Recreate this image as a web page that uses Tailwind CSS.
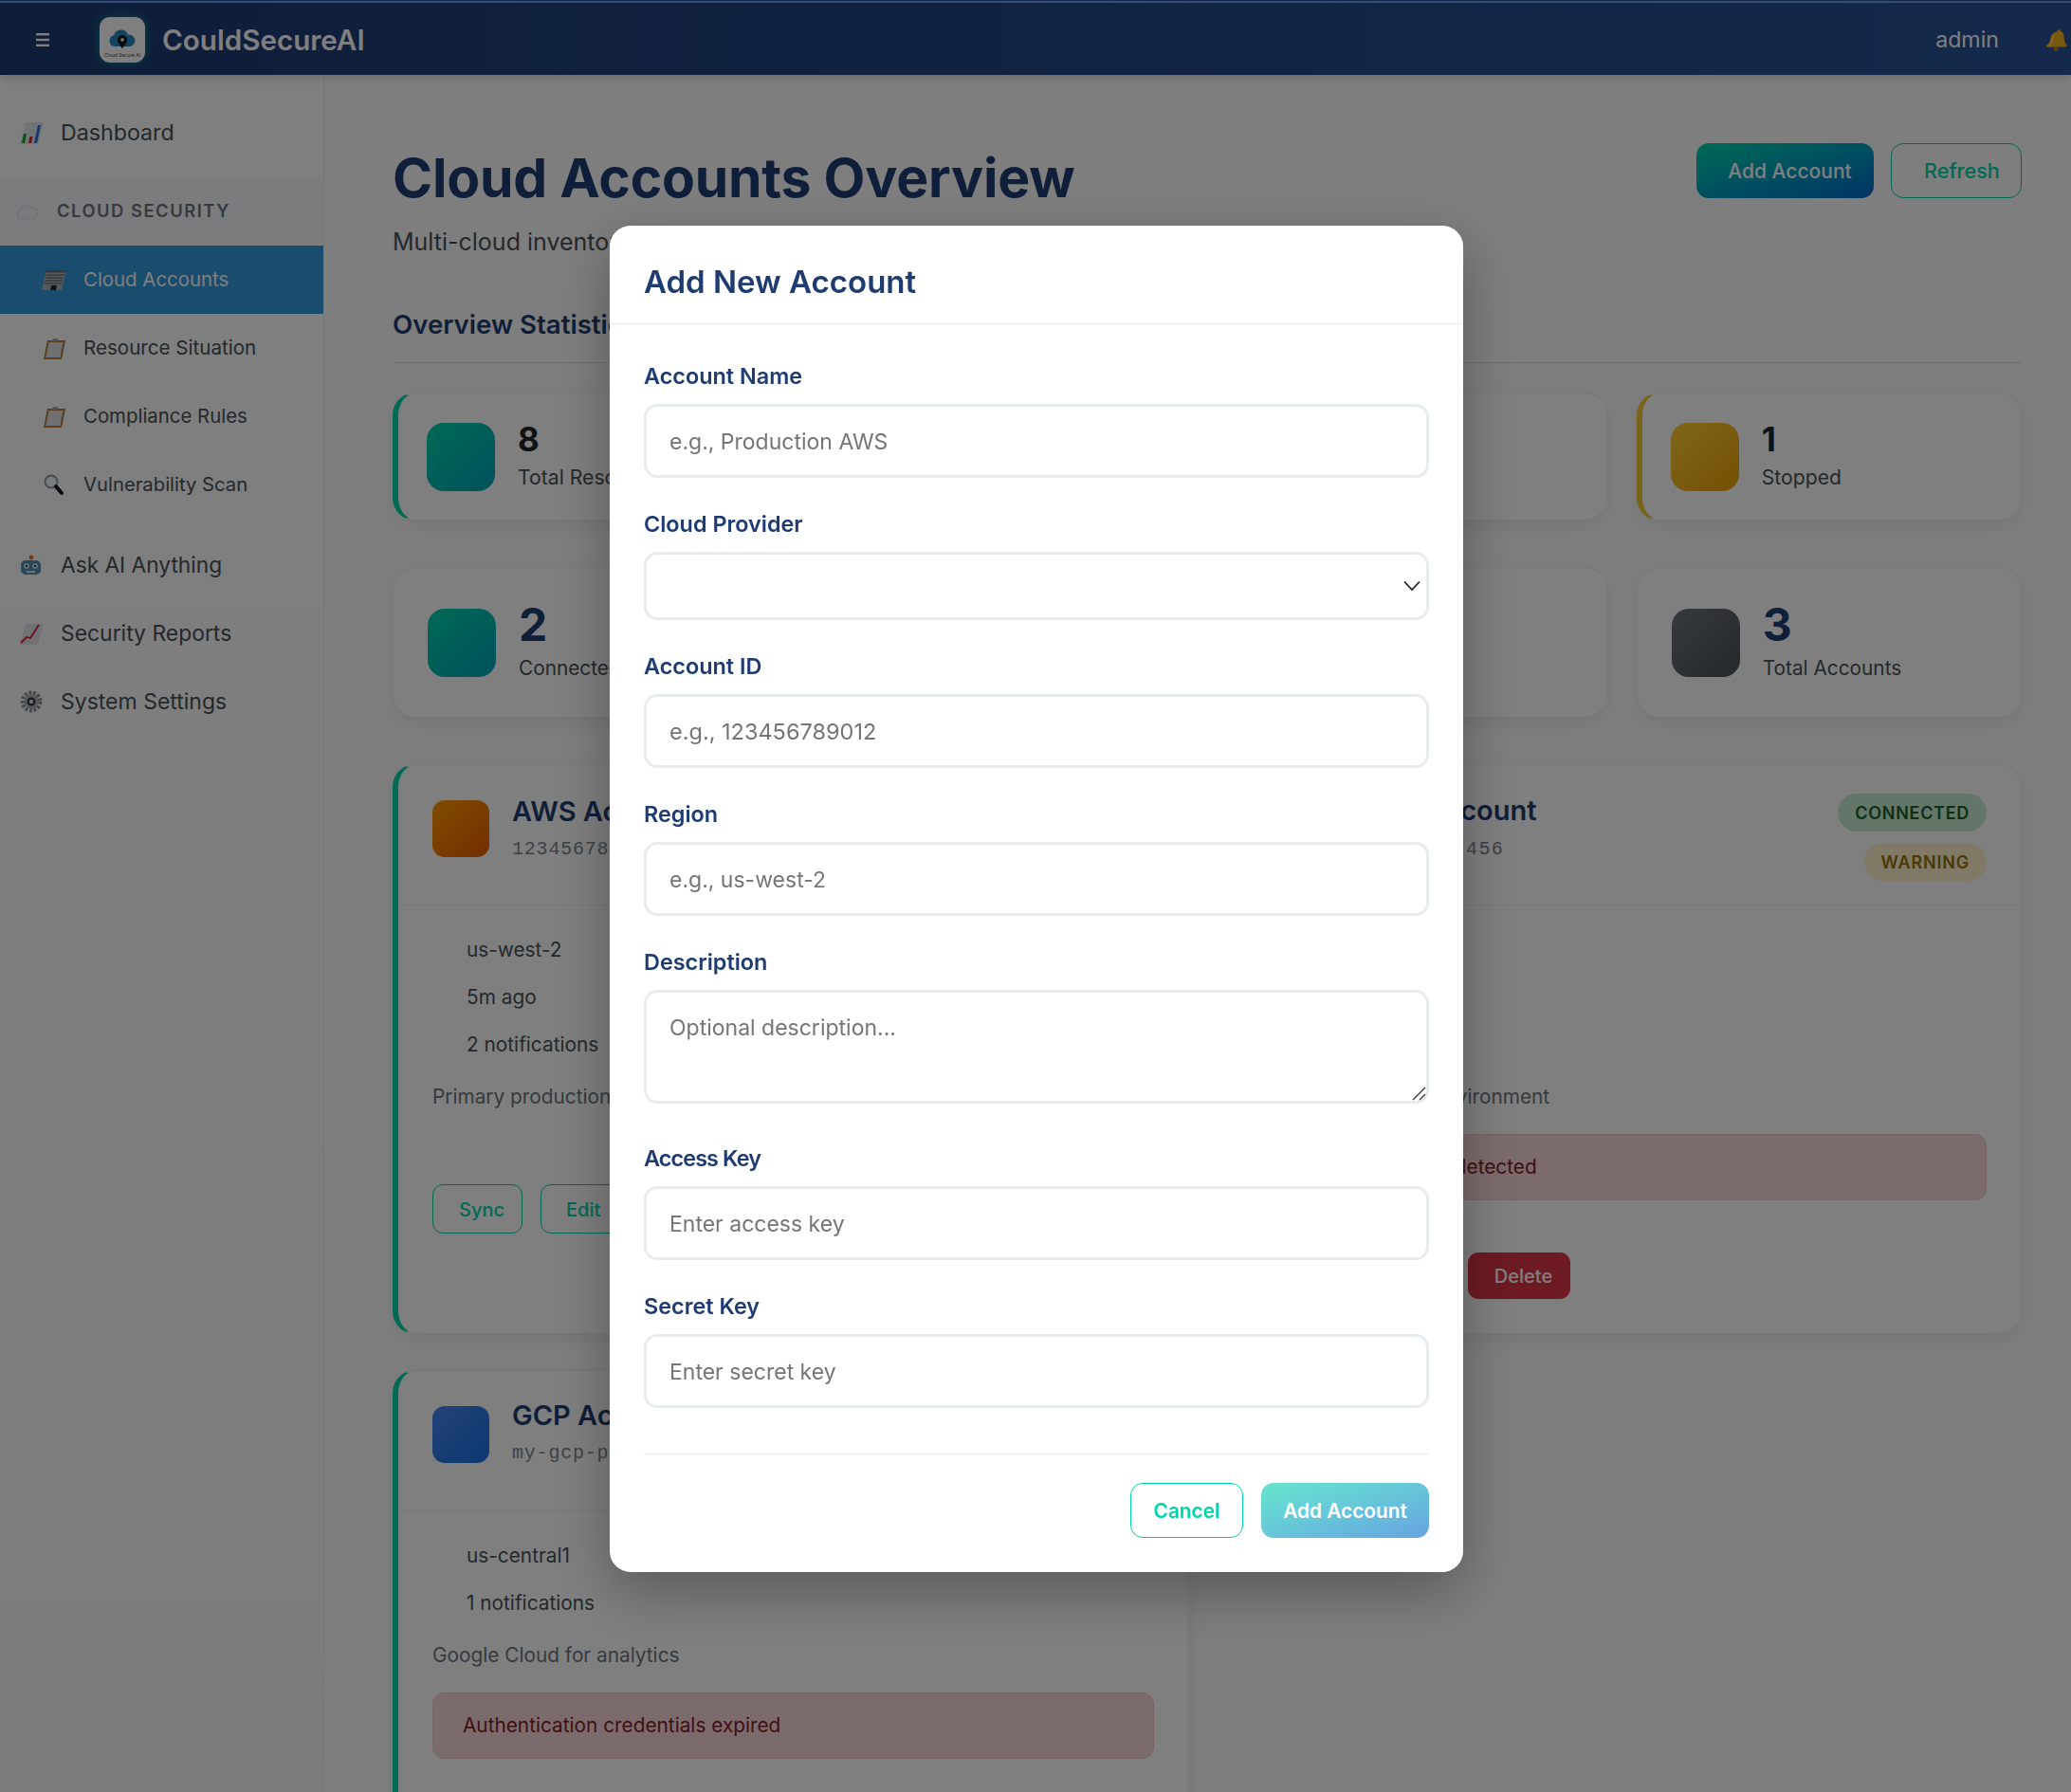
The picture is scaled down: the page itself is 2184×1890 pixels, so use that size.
<!DOCTYPE html>
<html lang="en">
<head>
    <meta charset="UTF-8">
    <meta name="viewport" content="width=device-width, initial-scale=1.0">
    <title>CouldSecureAI - Cloud Accounts</title>
    <script src="https://cdn.jsdelivr.net/npm/@tailwindcss/browser@4"></script>
</head>
<body class="w-[2184px] h-[1890px] overflow-hidden bg-[#fdfdfd] font-['Inter',sans-serif] text-[#495057]">

    <!-- Top bar -->
    <header class="h-[79px] bg-gradient-to-r from-[#1c3a70] to-[#2a5298] shadow-[0_2px_10px_rgba(0,0,0,0.2)] relative z-10">
        <div class="h-[1px] bg-[#2a5298]"></div>
        <div class="h-[2px] bg-[#6a9ae8]"></div>
        <div class="h-[78px] flex items-center pl-[38px] pr-[3px]">
            <svg class="w-[14px] h-[14px]" viewBox="0 0 14 14"><rect y="0" width="14" height="2.4" fill="#fff"/><rect y="5.8" width="14" height="2.4" fill="#fff"/><rect y="11.6" width="14" height="2.4" fill="#fff"/></svg>
            <div class="ml-[53px] w-[48px] h-[48px] rounded-[11px] bg-white flex flex-col items-center shadow-[0_0_10px_rgba(0,212,170,0.5)]">
                <svg class="w-[30px] h-[24px] mt-[12px]" viewBox="0 0 30 24">
                    <path d="M7 19a6 6 0 0 1-1-11.8A8 8 0 0 1 21 6.5 6.3 6.3 0 0 1 23 19z" fill="#2b84bd"/>
                    <path d="M15 7a5 5 0 0 1 5 5c0 3.500-5 9-5 9s-5-5.500-5-9a5 5 0 0 1 5-5z" fill="#14181f"/>
                    <circle cx="15" cy="12" r="1.800" fill="#fff"/>
                </svg>
                <span class="text-[5px] leading-[6px] mt-[1px] text-[#444] whitespace-nowrap">Cloud Secure AI</span>
            </div>
            <span class="ml-[18px] text-[29.6px] leading-[36px] font-semibold text-white">CouldSecureAI</span>
            <span class="ml-auto text-[23.2px] text-white">admin</span>
            <svg class="ml-[49px] w-[24px] h-[24px] shrink-0" viewBox="0 0 24 24">
                <path d="M14 1c1 0 2 1 2 2 3 1 3.500 4 3.800 7 .3 4 1.200 6 3.200 8l-1 1.500H1l0-1.500c3-2 4-4 4.500-8 .6-4 3.500-6 6.500-6.500.3-.9 1-1.500 2-1.500z" fill="#f2b21e"/>
                <path d="M5 19.500c1-4 1.500-8 4-12" fill="none" stroke="#ffd970" stroke-width="1.400"/>
                <circle cx="11" cy="21.500" r="2.500" fill="#b97c0e"/>
            </svg>
        </div>
    </header>

    <div class="flex h-[1811px]">
        <!-- Sidebar -->
        <aside class="w-[342px] shrink-0 border-r border-[#eceef0] bg-gradient-to-b from-white to-[#f8f9fa] pt-[31px]">
            <a class="h-[60px] mb-[17px] flex items-center pl-[20px] text-[23.200px] text-[#495057]">
                <svg class="w-[26px] h-[24px] shrink-0" viewBox="0 0 26 24">
                    <path d="M7 1h19l-6 23H1z" fill="#e3e8ee"/>
                    <path d="M3 23l2-10h3l-2 10z" fill="#1fa02c"/><path d="M10 23l1.500-7h3L13 23z" fill="#d8202a"/><path d="M16 23l4-19h3l-4 19z" fill="#2a6fd8"/>
                </svg>
                <span class="ml-[18px]">Dashboard</span>
            </a>
            <div class="h-[72px] flex items-center pl-[17px] bg-[#f5f8fc]">
                <svg class="w-[23px] h-[15px] shrink-0" viewBox="0 0 23 15"><path d="M5 15a4.500 4.500 0 0 1-1-8.800A6 6 0 0 1 14.500 3 5 5 0 0 1 18.500 15z" fill="#f4f6fa" stroke="#c9d2dc" stroke-width=".8"/></svg>
                <span class="ml-[20px] text-[18.400px] font-semibold tracking-[1.500px] uppercase text-[#6c757d]">Cloud Security</span>
            </div>
            <a class="h-[72px] flex items-center pl-[43px] bg-[#3498db] text-white text-[20.400px]">
                <svg class="w-[27px] h-[22px] shrink-0" viewBox="0 0 27 22">
                    <path d="M6 1h21l-5 21H1z" fill="#a9b2ba"/>
                    <path d="M6 1h21l-.6 2.500H5.400z" fill="#6a7076"/>
                    <path d="M6 6h19M5 9h19M4.400 12h19M3.500 15h19" stroke="#50565c" stroke-width="1.200"/>
                    <path d="M10 22l1-5h6l-1 5z" fill="#23272b"/>
                </svg>
                <span class="ml-[18px]">Cloud Accounts</span>
            </a>
            <a class="h-[72px] flex items-center pl-[45px] text-[20.600px]">
                <svg class="w-[24px] h-[23px] shrink-0" viewBox="0 0 24 23">
                    <path d="M5 3h19l-4 20H1z" fill="#b07a3e"/><path d="M6.500 5h15l-3.200 16H3.300z" fill="#dfe1e4"/><path d="M10 4l.5-3h6l-.5 3z" fill="#a4aab0"/>
                </svg>
                <span class="ml-[19px]">Resource Situation</span>
            </a>
            <a class="h-[72px] flex items-center pl-[45px] text-[20.400px]">
                <svg class="w-[24px] h-[23px] shrink-0" viewBox="0 0 24 23">
                    <path d="M5 3h19l-4 20H1z" fill="#b07a3e"/><path d="M6.500 5h15l-3.200 16H3.300z" fill="#dfe1e4"/><path d="M10 4l.5-3h6l-.5 3z" fill="#a4aab0"/>
                </svg>
                <span class="ml-[19px]">Compliance Rules</span>
            </a>
            <a class="h-[72px] flex items-center pl-[46px] text-[20.300px]">
                <svg class="w-[21px] h-[22px] shrink-0" viewBox="0 0 21 22">
                    <circle cx="8" cy="8" r="6.500" fill="#f4f7fa" stroke="#8a9198" stroke-width="1.800"/>
                    <path d="M13 13l6 7" stroke="#16191c" stroke-width="4" stroke-linecap="round"/>
                </svg>
                <span class="ml-[21px]">Vulnerability Scan</span>
            </a>
            <a class="h-[72px] mt-[13px] flex items-center pl-[21px] text-[22.700px]">
                <svg class="w-[23px] h-[22px] shrink-0" viewBox="0 0 23 22">
                    <circle cx="12" cy="3" r="2.400" fill="#e8752a"/><rect x="1" y="6" width="21" height="15" rx="5" fill="#4a8fb0"/>
                    <circle cx="7" cy="12" r="2.800" fill="#f0f2f4"/><circle cx="16" cy="12" r="2.800" fill="#f0f2f4"/><circle cx="7" cy="12" r="1.200" fill="#222"/><circle cx="16" cy="12" r="1.200" fill="#222"/>
                    <rect x="7" y="17" width="9" height="2.200" fill="#d9dde0"/>
                </svg>
                <span class="ml-[20px]">Ask AI Anything</span>
            </a>
            <a class="h-[72px] flex items-center pl-[20px] text-[22.900px]">
                <svg class="w-[26px] h-[23px] shrink-0" viewBox="0 0 26 23">
                    <path d="M7 1h19l-6 22H1z" fill="#e0e5ea"/><path d="M2 21l6-6 4 1 9-14" fill="none" stroke="#d5202c" stroke-width="1.800"/>
                </svg>
                <span class="ml-[18px]">Security Reports</span>
            </a>
            <a class="h-[72px] flex items-center pl-[21px] text-[23px]">
                <svg class="w-[24px] h-[24px] shrink-0" viewBox="0 0 24 24">
                    <circle cx="12" cy="12" r="9" fill="none" stroke="#8b9096" stroke-width="5" stroke-dasharray="2.800 1.600"/>
                    <circle cx="12" cy="12" r="7.500" fill="#aeb3b8"/><circle cx="12" cy="12" r="4.500" fill="#2f3439"/><circle cx="12" cy="12" r="2.200" fill="#d8dce0"/>
                </svg>
                <span class="ml-[19px]">System Settings</span>
            </a>
        </aside>

        <!-- Main content -->
        <main class="flex-1 pl-[72px] pr-[52px] pt-[72px]">
            <div class="flex justify-between items-start h-[171px]">
                <div class="pt-[2px]">
                    <h1 class="text-[57px] leading-[70px] font-bold text-[#1e3c72] tracking-[-0.2px]">Cloud Accounts Overview</h1>
                    <p class="mt-[16px] text-[25px] leading-[32px] text-[#495057]">Multi-cloud inventory and security posture</p>
                </div>
                <div class="flex gap-[18px]">
                    <button class="h-[58px] w-[187px] pl-[33px] pr-[23px] pt-[1px] rounded-[13px] bg-gradient-to-br from-[#00d4aa] to-[#0066cc] text-white text-[21px] font-medium whitespace-nowrap">Add Account</button>
                    <button class="h-[58px] w-[138px] pl-[34px] pr-[24px] rounded-[13px] border border-[#00d4aa] text-[#00d4aa] text-[21.600px] font-medium">Refresh</button>
                </div>
            </div>
            <h2 class="h-[61px] pb-[21px] pt-[1px] leading-[38px] border-b border-[#d9dde1] text-[27.600px] font-semibold text-[#1e3c72]">Overview Statistics</h2>

            <!-- Stats, first row -->
            <div class="grid grid-cols-4 gap-[31px] mt-[31px]">
                <div class="h-[135px] flex items-center gap-[24px] pl-[30px] rounded-[24px] bg-white border border-[#f0f1f3] border-l-[6px] border-l-[#00d4aa] shadow-[0_6px_20px_rgba(0,0,0,0.08)]">
                    <div class="w-[72px] h-[72px] rounded-[18px] bg-gradient-to-br from-[#00d4aa] to-[#00a3b8]"></div>
                    <div class="pb-[3px]"><div class="text-[35px] leading-[40px] font-bold text-[#212529]">8</div><div class="mt-[6px] text-[21.200px] leading-[28px] text-[#495057]">Total Resources</div></div>
                </div>
                <div class="h-[135px] flex items-center gap-[24px] pl-[30px] rounded-[24px] bg-white border border-[#f0f1f3] border-l-[6px] border-l-[#00d4aa] shadow-[0_6px_20px_rgba(0,0,0,0.08)]">
                    <div class="w-[72px] h-[72px] rounded-[18px] bg-gradient-to-br from-[#00d4aa] to-[#00a3b8]"></div>
                    <div class="pb-[3px]"><div class="text-[35px] leading-[40px] font-bold text-[#212529]">5</div><div class="mt-[6px] text-[21.200px] leading-[28px] text-[#495057]">Running</div></div>
                </div>
                <div class="h-[135px] flex items-center gap-[24px] pl-[36px] rounded-[24px] bg-white border border-[#f0f1f3] shadow-[0_6px_20px_rgba(0,0,0,0.08)]">
                    <div class="w-[72px] h-[72px] rounded-[18px] bg-gradient-to-br from-[#00d4aa] to-[#00a3b8]"></div>
                    <div class="pb-[3px]"><div class="text-[35px] leading-[40px] font-bold text-[#212529]">2</div><div class="mt-[6px] text-[21.200px] leading-[28px] text-[#495057]">Idle</div></div>
                </div>
                <div class="h-[135px] flex items-center gap-[24px] pl-[30px] rounded-[24px] bg-white border border-[#f0f1f3] border-l-[6px] border-l-[#f0c832] shadow-[0_6px_20px_rgba(0,0,0,0.08)]">
                    <div class="w-[72px] h-[72px] rounded-[18px] bg-gradient-to-br from-[#ffcc30] to-[#e8a000]"></div>
                    <div class="pb-[3px]"><div class="text-[35px] leading-[40px] font-bold text-[#212529]">1</div><div class="mt-[6px] text-[21.200px] leading-[28px] text-[#495057]">Stopped</div></div>
                </div>
            </div>

            <!-- Stats, second row -->
            <div class="grid grid-cols-4 gap-[31px] mt-[49px]">
                <div class="h-[159px] flex items-center gap-[24px] pl-[36px] rounded-[24px] bg-white border border-[#f0f1f3] shadow-[0_6px_20px_rgba(0,0,0,0.08)]">
                    <div class="w-[72px] h-[72px] rounded-[18px] bg-gradient-to-br from-[#00d4aa] to-[#00a3b8]"></div>
                    <div class="pb-[3px]"><div class="text-[48px] leading-[52px] font-bold text-[#1e3c72]">2</div><div class="mt-[6px] text-[20.800px] leading-[28px] text-[#495057]">Connected</div></div>
                </div>
                <div class="h-[159px] flex items-center gap-[24px] pl-[36px] rounded-[24px] bg-white border border-[#f0f1f3] shadow-[0_6px_20px_rgba(0,0,0,0.08)]">
                    <div class="w-[72px] h-[72px] rounded-[18px] bg-gradient-to-br from-[#dc3545] to-[#a71d2a]"></div>
                    <div class="pb-[3px]"><div class="text-[48px] leading-[52px] font-bold text-[#1e3c72]">1</div><div class="mt-[6px] text-[20.800px] leading-[28px] text-[#495057]">Failed</div></div>
                </div>
                <div class="h-[159px] flex items-center gap-[24px] pl-[36px] rounded-[24px] bg-white border border-[#f0f1f3] shadow-[0_6px_20px_rgba(0,0,0,0.08)]">
                    <div class="w-[72px] h-[72px] rounded-[18px] bg-gradient-to-br from-[#ffcc30] to-[#e8a000]"></div>
                    <div class="pb-[3px]"><div class="text-[48px] leading-[52px] font-bold text-[#1e3c72]">1</div><div class="mt-[6px] text-[20.800px] leading-[28px] text-[#495057]">Warnings</div></div>
                </div>
                <div class="h-[159px] flex items-center gap-[24px] pl-[36px] rounded-[24px] bg-white border border-[#f0f1f3] shadow-[0_6px_20px_rgba(0,0,0,0.08)]">
                    <div class="w-[72px] h-[72px] rounded-[18px] bg-gradient-to-br from-[#6c757d] to-[#495057]"></div>
                    <div class="pb-[3px]"><div class="text-[48px] leading-[52px] font-bold text-[#1e3c72]">3</div><div class="mt-[6px] text-[20.800px] leading-[28px] text-[#495057]">Total Accounts</div></div>
                </div>
            </div>

            <!-- Account cards -->
            <div class="grid grid-cols-[840px_846px] gap-x-[32px] gap-y-[38px] mt-[49px]">
                <article class="h-[601px] rounded-[24px] bg-white border border-[#f0f1f3] border-l-[6px] border-l-[#00d4aa] shadow-[0_6px_20px_rgba(0,0,0,0.08)]">
                    <div class="h-[148px] px-[36px] pt-[37px] flex gap-[24px] border-b border-[#eceef0]">
                        <div class="w-[60px] h-[60px] rounded-[13px] bg-gradient-to-br from-[#ff9900] to-[#e85d00]"></div>
                        <div>
                            <div class="text-[29px] leading-[36px] mt-[-6px] font-semibold text-[#1e3c72]">AWS Account</div>
                            <div class="mt-[10px] font-['Liberation_Mono',monospace] text-[20px] leading-[24px] tracking-[0.800px] text-[#7c858d]">123456789012</div>
                        </div>
                    </div>
                    <div class="pl-[36px] pr-[36px] pt-[32px]">
                        <div class="pl-[36px] text-[20.800px] leading-[30px] text-[#495057]">us-west-2</div>
                        <div class="pl-[36px] mt-[20px] text-[20.800px] leading-[30px] text-[#495057]">5m ago</div>
                        <div class="pl-[36px] mt-[20px] text-[20.800px] leading-[30px] text-[#495057]">2 notifications</div>
                        <p class="mt-[25px] text-[20.800px] leading-[30px] text-[#6c757d]">Primary production workloads</p>
                        <div class="mt-[77px] flex gap-[19px]">
                            <button class="h-[52px] w-[95px] pl-[27px] pr-[19px] pt-[1px] rounded-[11px] border border-[#00d4aa] text-[#00d4aa] text-[20px] font-medium">Sync</button>
                            <button class="h-[52px] pl-[26px] pr-[19px] pt-[1px] rounded-[11px] border border-[#00d4aa] text-[#00d4aa] text-[20px] font-medium">Edit</button>
                        </div>
                    </div>
                </article>

                <article class="h-[601px] rounded-[24px] bg-white border border-[#f0f1f3] shadow-[0_6px_20px_rgba(0,0,0,0.08)]">
                    <div class="h-[148px] pl-[41px] pr-[36px] pt-[30px] flex justify-between border-b border-[#eceef0]">
                        <div class="flex gap-[24px]">
                            <div class="w-[60px] h-[60px] mt-[7px] rounded-[13px] bg-gradient-to-br from-[#0078d4] to-[#0050a0]"></div>
                            <div>
                                <div class="text-[29px] leading-[36px] font-semibold text-[#1e3c72]">Azure Account</div>
                                <div class="mt-[11px] font-['Liberation_Mono',monospace] text-[20px] leading-[24px] tracking-[1.400px] text-[#7c858d]">abc-def-ef456</div>
                            </div>
                        </div>
                        <div class="flex flex-col items-end gap-[12px]">
                            <span class="h-[40px] px-[18px] flex items-center rounded-full bg-[#c8ecd5] text-[#17602c] text-[18px] font-semibold tracking-[0.700px] uppercase">Connected</span>
                            <span class="h-[40px] px-[18px] flex items-center rounded-full bg-[#fff3cd] text-[#967006] text-[18px] font-semibold tracking-[0.800px] uppercase">Warning</span>
                        </div>
                    </div>
                    <div class="pl-[49px] pr-[36px] pt-[32px]">
                        <div class="pl-[36px] text-[20.800px] leading-[30px] text-[#495057]">eastus</div>
                        <div class="pl-[36px] mt-[20px] text-[20.800px] leading-[30px] text-[#495057]">12m ago</div>
                        <div class="pl-[36px] mt-[20px] text-[20.800px] leading-[30px] text-[#495057]">3 notifications</div>
                        <p class="mt-[25px] text-[20.800px] leading-[30px] text-[#6c757d]">Azure production environment</p>
                        <div class="mt-[24px] h-[70px] flex items-center pl-[34px] rounded-[12px] bg-[#f8d7da] border border-[#f5c6cb] text-[20.800px] text-[#7f1d27]">Unusual activity detected</div>
                        <div class="mt-[55px] flex justify-end pr-[439px]">
                            <button class="h-[49px] w-[108px] pl-[27px] pr-[18px] pt-[1px] rounded-[11px] bg-[#dc3545] text-white text-[20px] font-medium">Delete</button>
                        </div>
                    </div>
                </article>

                <article class="h-[600px] rounded-[24px] bg-white border border-[#f0f1f3] border-l-[6px] border-l-[#00d4aa] shadow-[0_6px_20px_rgba(0,0,0,0.08)]">
                    <div class="h-[148px] px-[36px] pt-[37px] flex gap-[24px] border-b border-[#eceef0]">
                        <div class="w-[60px] h-[60px] rounded-[13px] bg-gradient-to-br from-[#4285f4] to-[#1a6fe0]"></div>
                        <div>
                            <div class="text-[29px] leading-[36px] mt-[-8px] font-semibold text-[#1e3c72]">GCP Account</div>
                            <div class="mt-[10px] font-['Liberation_Mono',monospace] text-[20px] leading-[24px] tracking-[0.800px] text-[#7c858d]">my-gcp-project</div>
                        </div>
                    </div>
                    <div class="pl-[36px] pr-[36px] pt-[32px]">
                        <div class="pl-[36px] text-[20.800px] leading-[30px] text-[#495057]">us-central1</div>
                        <div class="pl-[36px] mt-[20px] text-[20.800px] leading-[30px] text-[#495057]">1 notifications</div>
                        <p class="mt-[25px] text-[20.800px] leading-[30px] text-[#6c757d]">Google Cloud for analytics</p>
                        <div class="mt-[24px] h-[70px] flex items-center pl-[31px] rounded-[12px] bg-[#f8d7da] border border-[#f5c6cb] text-[20.800px] text-[#7f1d27]">Authentication credentials expired</div>
                    </div>
                </article>
            </div>
        </main>
    </div>

    <!-- Modal -->
    <div class="fixed inset-0 z-20 bg-black/50 flex items-center justify-center pt-[6px] pl-[2px]">
        <div class="w-[900px] h-[1420px] rounded-[22px] bg-white shadow-[0_20px_60px_rgba(0,0,0,0.3)]">
            <div class="h-[104px] pt-[39px] px-[36px] border-b border-[#e9ecef]">
                <h3 class="text-[33px] leading-[40px] font-semibold text-[#1e3c72]">Add New Account</h3>
            </div>
            <form class="px-[36px] pt-[40px]">
                <div class="mb-[34px]">
                    <label class="block mb-[14px] text-[23.400px] leading-[30px] font-semibold text-[#1e3c72]">Account Name</label>
                    <input type="text" placeholder="e.g., Production AWS" class="block w-full h-[78px] px-[24px] pt-[1px] rounded-[14px] border-[3px] border-[#e9ecef] text-[23px] placeholder:text-[#757575] outline-none">
                </div>
                <div class="mb-[34px]">
                    <label class="block mb-[14px] text-[23.400px] leading-[30px] font-semibold text-[#1e3c72]">Cloud Provider</label>
                    <div class="relative">
                        <select class="block w-full h-[72px] px-[24px] rounded-[14px] border-[3px] border-[#e9ecef] bg-white text-[23px] appearance-none outline-none"><option></option></select>
                        <svg class="absolute right-[9px] top-[30px] w-[18px] h-[12px] pointer-events-none" viewBox="0 0 18 12"><path d="M1 1.500l8 8.500 8-8.500" fill="none" stroke="#222" stroke-width="1.800"/></svg>
                    </div>
                </div>
                <div class="mb-[34px]">
                    <label class="block mb-[14px] text-[23.400px] leading-[30px] font-semibold text-[#1e3c72]">Account ID</label>
                    <input type="text" placeholder="e.g., 123456789012" class="block w-full h-[78px] px-[24px] rounded-[14px] border-[3px] border-[#e9ecef] text-[23.500px] placeholder:text-[#757575] outline-none">
                </div>
                <div class="mb-[34px]">
                    <label class="block mb-[14px] text-[23.400px] leading-[30px] font-semibold text-[#1e3c72]">Region</label>
                    <input type="text" placeholder="e.g., us-west-2" class="block w-full h-[78px] px-[24px] pt-[1px] rounded-[14px] border-[3px] border-[#e9ecef] text-[23px] placeholder:text-[#757575] outline-none">
                </div>
                <div class="mb-[43px]">
                    <label class="block mb-[14px] text-[23.400px] leading-[30px] font-semibold text-[#1e3c72]">Description</label>
                    <div class="relative">
                        <textarea placeholder="Optional description..." class="block w-full h-[120px] px-[24px] py-[22px] rounded-[14px] border-[3px] border-[#e9ecef] text-[23px] leading-[30px] placeholder:text-[#757575] outline-none resize-none"></textarea>
                        <svg class="absolute right-[3px] bottom-[3px] w-[16px] h-[16px] pointer-events-none" viewBox="0 0 16 16"><path d="M2 15L15 2M9 15l6-6" stroke="#333" stroke-width="1.300"/></svg>
                    </div>
                </div>
                <div class="mb-[34px]">
                    <label class="block mb-[14px] text-[23.400px] leading-[30px] font-semibold tracking-[-0.900px] text-[#1e3c72]">Access Key</label>
                    <input type="text" placeholder="Enter access key" class="block w-full h-[78px] px-[24px] pt-[1px] rounded-[14px] border-[3px] border-[#e9ecef] text-[23px] placeholder:text-[#757575] outline-none">
                </div>
                <div>
                    <label class="block mb-[14px] text-[23.400px] leading-[30px] font-semibold text-[#1e3c72]">Secret Key</label>
                    <input type="password" placeholder="Enter secret key" class="block w-full h-[78px] px-[24px] pt-[1px] rounded-[14px] border-[3px] border-[#e9ecef] text-[23px] placeholder:text-[#757575] outline-none">
                </div>
                <div class="mt-[48px] pt-[30px] border-t border-[#e9ecef] flex justify-end gap-[19px]">
                    <button type="button" class="h-[58px] w-[119px] pt-[1px] rounded-[13px] border border-[#00d4aa] text-[#00d4aa] text-[20.800px] font-semibold">Cancel</button>
                    <button type="button" class="h-[58px] w-[177px] pt-[1px] rounded-[13px] bg-gradient-to-br from-[#00d4aa] to-[#0066cc] opacity-60 text-white text-[20.800px] font-semibold">Add Account</button>
                </div>
            </form>
        </div>
    </div>

</body>
</html>
